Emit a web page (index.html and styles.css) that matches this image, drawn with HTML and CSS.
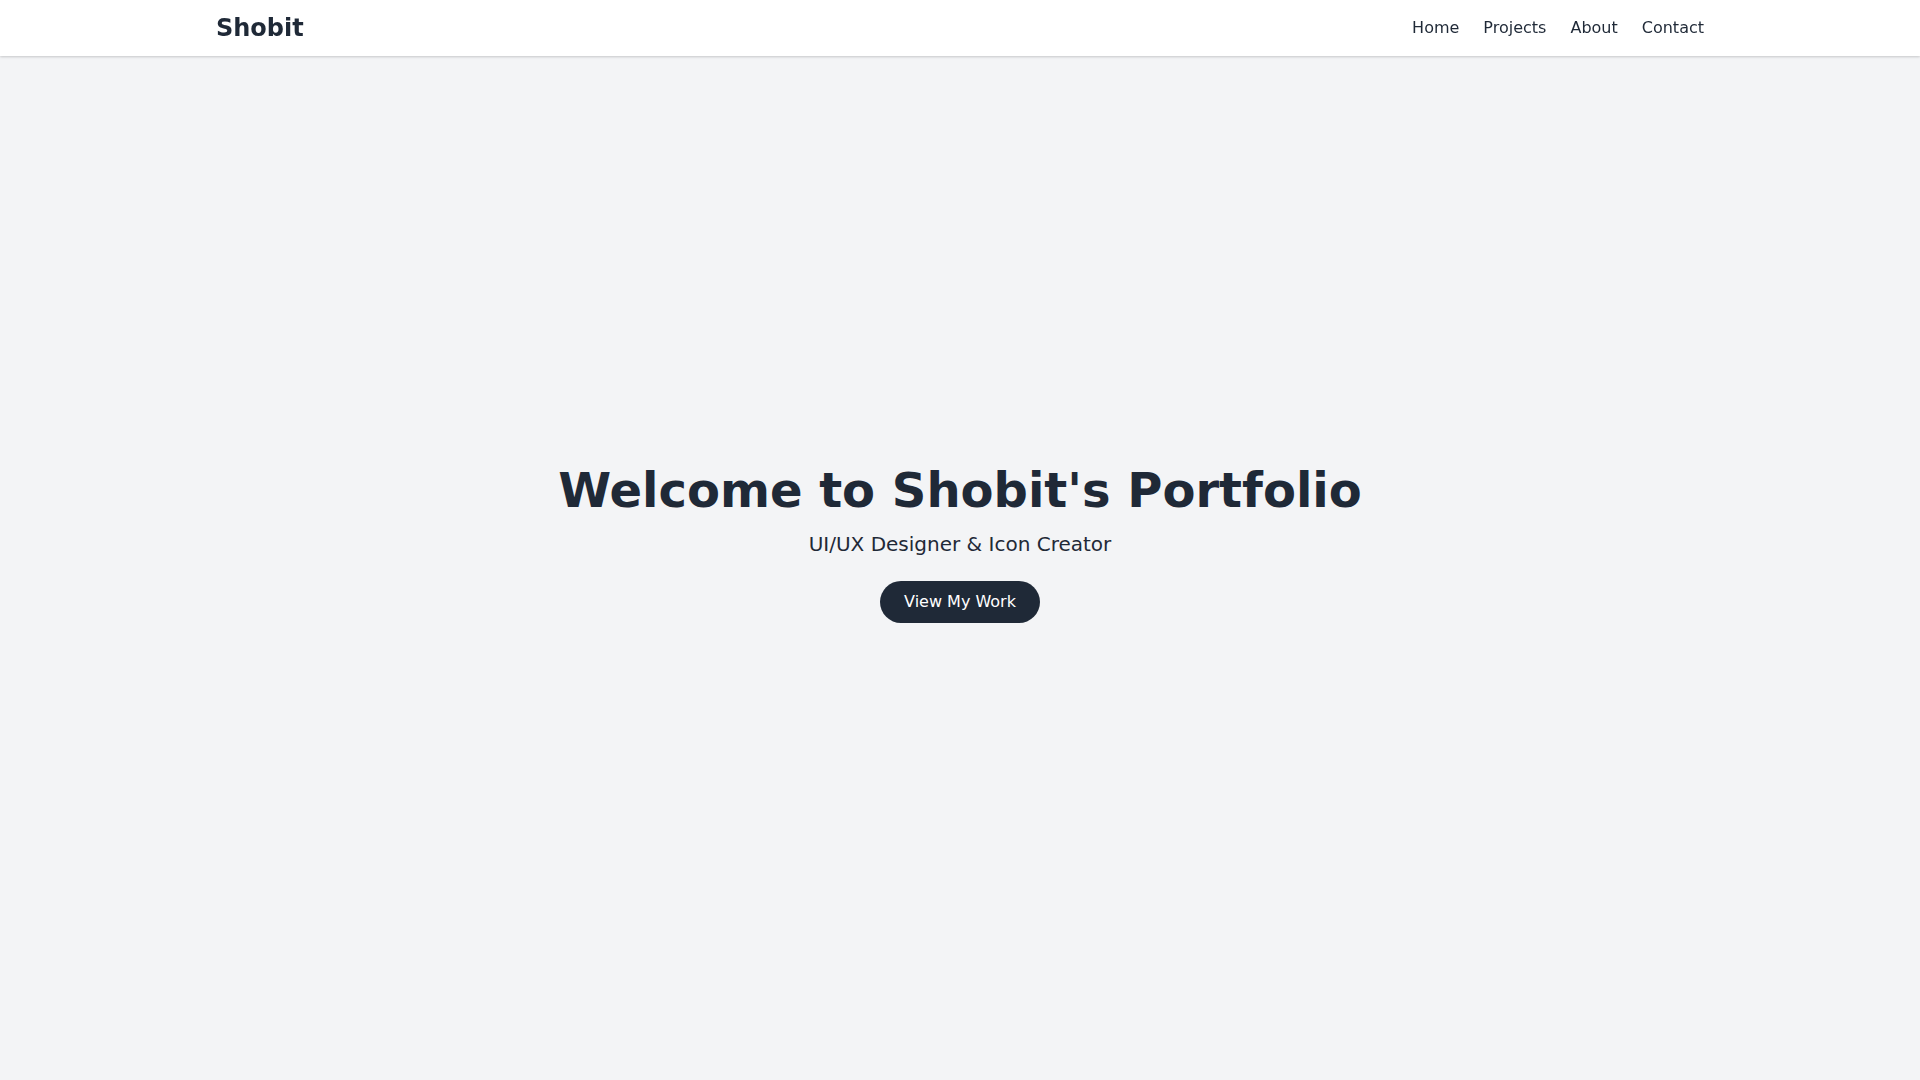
FILE: index.html
```html
<!DOCTYPE html>
<html lang="en">
<head>
<meta charset="utf-8">
<title>Shobit's Portfolio</title>
<link rel="stylesheet" href="styles.css">
</head>
<body>
<header class="site-header">
  <div class="container header-inner">
    <a class="logo" href="#">Shobit</a>
    <nav class="nav">
      <a href="#">Home</a>
      <a href="#">Projects</a>
      <a href="#">About</a>
      <a href="#">Contact</a>
    </nav>
  </div>
</header>
<section class="hero">
  <h1 class="hero-title">Welcome to Shobit's Portfolio</h1>
  <p class="hero-sub">UI/UX Designer &amp; Icon Creator</p>
  <a class="btn" href="#">View My Work</a>
</section>
</body>
</html>
```
FILE: styles.css
```css
* { box-sizing: border-box; }
html, body { margin: 0; padding: 0; }
body {
  font-family: "DejaVu Sans", sans-serif;
  background: #f3f4f6;
  color: #1f2937;
  line-height: 1.5;
}
a { text-decoration: none; color: inherit; }
.site-header {
  position: fixed;
  top: 0; left: 0; right: 0;
  background: #ffffff;
  box-shadow: 0 1px 3px rgba(0,0,0,0.12), 0 1px 2px rgba(0,0,0,0.08);
  z-index: 10;
}
.container {
  max-width: 1536px;
  margin: 0 auto;
  padding: 0 24px;
}
.header-inner {
  display: flex;
  justify-content: space-between;
  align-items: center;
  height: 56px;
}
.logo {
  font-size: 24px;
  font-weight: 700;
  color: #1f2937;
}
.nav {
  display: flex;
  gap: 24px;
  font-size: 16px;
  color: #1f2937;
}
.hero {
  height: 100vh;
  padding-top: 8px;
  display: flex;
  flex-direction: column;
  align-items: center;
  justify-content: center;
  text-align: center;
}
.hero-title {
  margin: 0;
  font-size: 48px;
  line-height: 1;
  font-weight: 700;
  color: #1f2937;
}
.hero-sub {
  margin: 16px 0 0;
  font-size: 20px;
  line-height: 28px;
  color: #1f2937;
}
.btn {
  margin-top: 23px;
  display: inline-block;
  background: #1f2937;
  color: #ffffff;
  font-size: 16px;
  line-height: 24px;
  padding: 9px 24px;
  border-radius: 9999px;
}
```
